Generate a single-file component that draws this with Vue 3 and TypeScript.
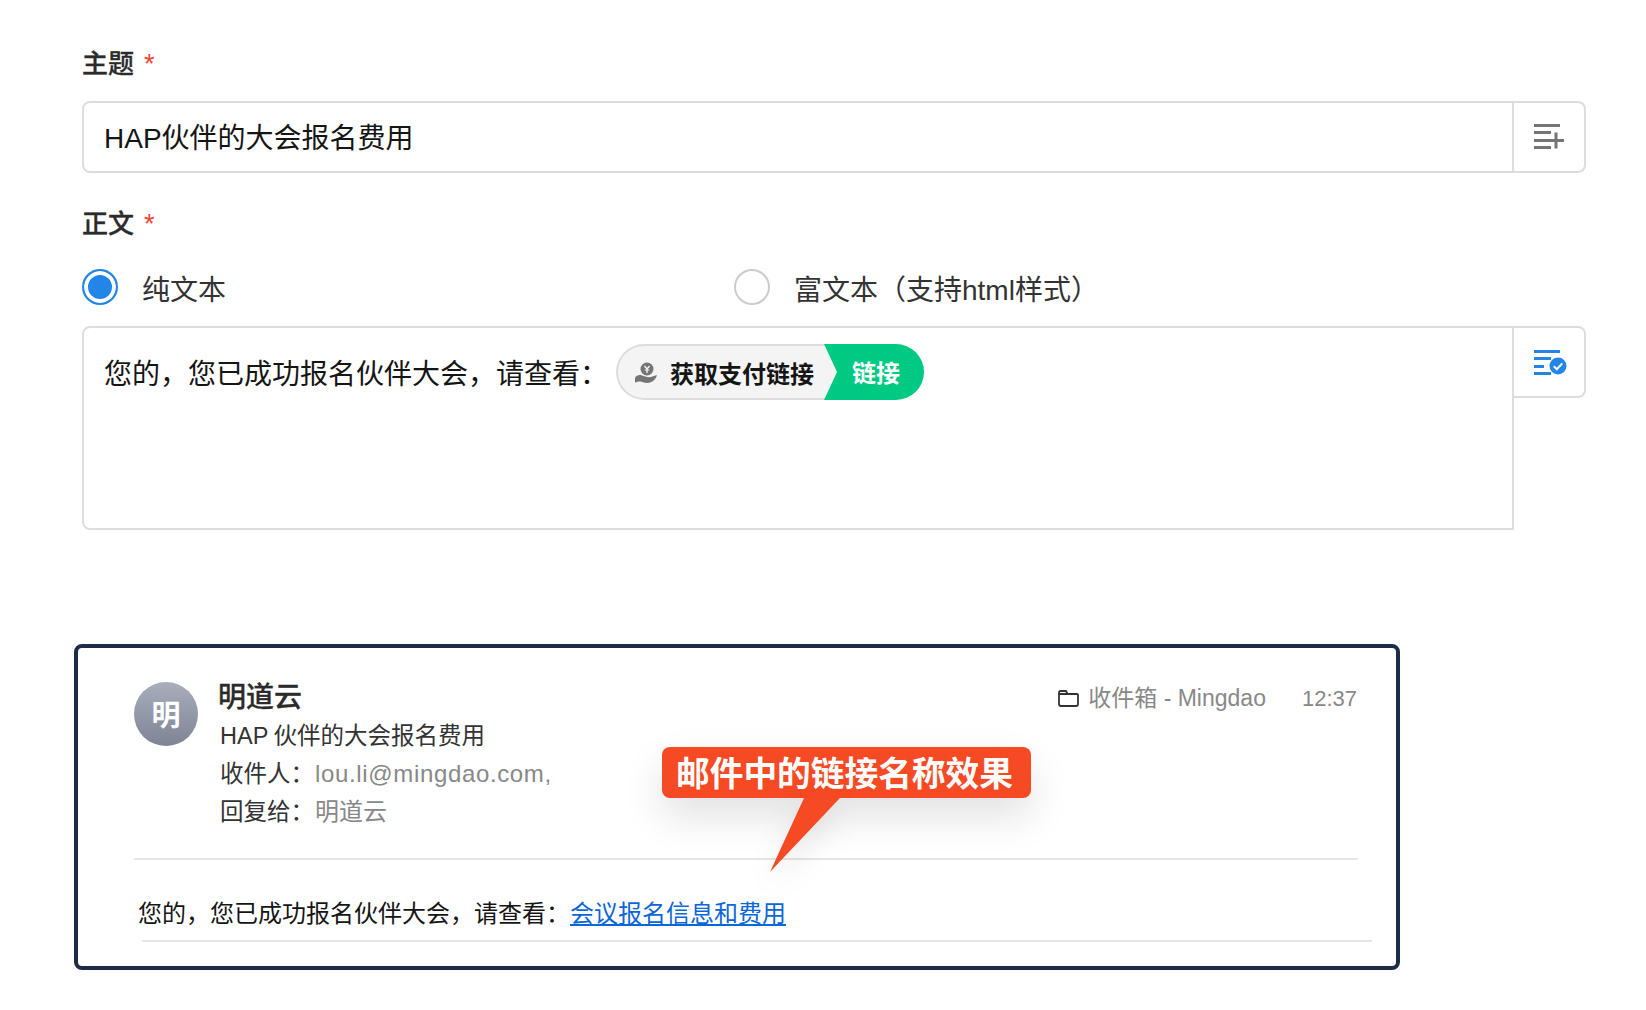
<script setup lang="ts">
const subject: string = 'HAP伙伴的大会报名费用'
const bodyText: string = '您的，您已成功报名伙伴大会，请查看：'
</script>

<template>
  <div class="page">
    <div class="label">主题<span class="req">*</span></div>
    <div class="input">
      <div class="input-text">{{ subject }}</div>
      <div class="side">
        <svg class="add-icon" width="32" height="28" viewBox="0 0 32 28" fill="#757575">
          <rect x="0" y="0" width="26" height="3" />
          <rect x="0" y="7" width="17" height="3" />
          <rect x="0" y="15" width="17" height="3" />
          <rect x="0" y="22" width="17" height="3" />
          <rect x="15" y="15" width="15" height="3" />
          <rect x="20.500" y="8.500" width="3" height="16" />
        </svg>
      </div>
    </div>

    <div class="label second">正文<span class="req">*</span></div>
    <div class="radios">
      <div class="option">
        <span class="radio on"></span>
        <span class="option-text">纯文本</span>
      </div>
      <div class="option">
        <span class="radio"></span>
        <span class="option-text">富文本（支持html样式）</span>
      </div>
    </div>

    <div class="editor-row">
      <div class="editor">
        <span class="editor-text">{{ bodyText }}</span>
        <span class="chip">
          <span class="chip-main">
            <svg class="hand" width="24" height="24" viewBox="0 0 24 24">
              <circle cx="13" cy="8" r="6.500" fill="#757575" />
              <path d="M10.500 5l2.500 3 2.500-3M13 8v4M10.800 9h4.400" stroke="#fff" stroke-width="1.200" fill="none" />
              <path d="M1 17c1.500-3 4.500-3.500 7-2.500l5 1.500c3 .5 6-.5 10-2-1 4-4.500 8-10 8-3 0-5-1.500-7-1.500-2 0-3 .5-5 1z" fill="#757575" />
            </svg>
            <span class="chip-title">获取支付链接</span>
          </span>
          <span class="chip-tag">链接</span>
        </span>
      </div>
      <div class="side-tab">
        <svg width="34" height="26" viewBox="0 0 34 26" fill="#2186e8">
          <rect x="0" y="0" width="26" height="3" />
          <rect x="0" y="7" width="17" height="3" />
          <rect x="0" y="15" width="10" height="3" />
          <rect x="0" y="22" width="17" height="3" />
          <circle cx="24" cy="16" r="8.500" />
          <path d="M19.800 16.200l3 3 5.500-5.800" stroke="#fff" stroke-width="2" fill="none" />
        </svg>
      </div>
    </div>

    <div class="card">
      <div class="head">
        <div class="avatar">明</div>
        <div class="meta">
          <div class="name">明道云</div>
          <div class="row subject">HAP 伙伴的大会报名费用</div>
          <div class="row">收件人：<span class="val mail">lou.li@mingdao.com,</span></div>
          <div class="row">回复给：<span class="val">明道云</span></div>
        </div>
        <div class="info">
          <svg class="folder-icon" width="21" height="17" viewBox="0 0 21 17" fill="none" stroke="#333" stroke-width="1.800">
            <path d="M1 3.500V14a2 2 0 0 0 2 2h15a2 2 0 0 0 2-2V5a1 1 0 0 0-1-1H1zM1 4V2.500A1.500 1.500 0 0 1 2.500 1H8l1.500 3" />
          </svg>
          <span class="folder">收件箱 - Mingdao</span>
          <span class="time">12:37</span>
        </div>
      </div>
      <div class="rule"></div>
      <div class="body">您的，您已成功报名伙伴大会，请查看：<a class="link">会议报名信息和费用</a></div>
      <div class="rule lower"></div>

      <div class="callout">邮件中的链接名称效果</div>
      <svg class="pointer" width="72" height="76" viewBox="0 0 72 76">
        <polygon points="34,0 70,0 0,74" fill="#f64a25" />
      </svg>
    </div>
  </div>
</template>

<style>
html, body { background: #fff; }
</style>

<style scoped>
.page {
  box-sizing: border-box;
  width: 1646px;
  height: 1010px;
  padding: 47px 60px 0 82px;
  font-family: "Liberation Sans", "Noto Sans CJK SC", sans-serif;
  color: #151515;
  overflow: hidden;
}
.label {
  height: 34px;
  line-height: 34px;
  font-size: 26px;
  font-weight: 500;
  color: #2b2b2b;
  -webkit-text-stroke: 0.3px #2b2b2b;
}
.label.second { margin-top: 34px; }
.req {
  margin-left: 10px;
  color: #f44336;
  font-size: 27px;
  font-weight: 400;
  -webkit-text-stroke: 0;
}
.input {
  display: flex;
  height: 72px;
  margin-top: 20px;
  box-sizing: border-box;
  border: 2px solid #ddd;
  border-radius: 8px;
}
.input-text {
  flex: 1;
  padding-left: 20px;
  line-height: 72px;
  font-size: 28px;
}
.side {
  width: 72px;
  border-left: 2px solid #ddd;
  display: flex;
  align-items: center;
  box-sizing: border-box;
  padding-left: 20px;
}
.add-icon { margin-top: 2px; }
.radios {
  display: flex;
  margin-top: 28px;
  height: 36px;
}
.option {
  width: 652px;
  display: flex;
  align-items: center;
  gap: 24px;
  font-size: 28px;
  color: #333;
  line-height: 42px;
}
.option-text { margin-top: 8px; }
.radio {
  box-sizing: border-box;
  width: 36px;
  height: 36px;
  border-radius: 50%;
  border: 2px solid #ccc;
  flex: none;
}
.radio.on {
  border-color: #2186e8;
  background: #2186e8;
  box-shadow: inset 0 0 0 4px #fff;
}
.editor-row {
  display: flex;
  align-items: flex-start;
  margin-top: 21px;
}
.editor {
  box-sizing: border-box;
  width: 1432px;
  height: 204px;
  border: 2px solid #ddd;
  border-radius: 8px 0 0 8px;
  padding: 16px 0 0 20px;
  display: flex;
  align-items: flex-start;
  font-size: 28px;
}
.editor-text { line-height: 61px; }
.chip {
  display: inline-flex;
  height: 56px;
  margin-left: 8px;
}
.chip-main {
  box-sizing: border-box;
  width: 221px;
  height: 56px;
  border: 2px solid #ddd;
  border-right: 0;
  border-radius: 28px 0 0 28px;
  background: #f4f4f4;
  display: flex;
  align-items: center;
  padding-left: 16px;
}
.hand { flex: none; margin-top: 2px; }
.chip-title {
  margin-left: 12px;
  padding-top: 6px;
  font-size: 24px;
  font-weight: 700;
  color: #151515;
  line-height: 44px;
}
.chip-tag {
  box-sizing: border-box;
  width: 100px;
  height: 56px;
  margin-left: -13px;
  padding-left: 28px;
  background: #00c983;
  color: #fff;
  font-size: 24px;
  font-weight: 700;
  line-height: 59px;
  border-radius: 0 28px 28px 0;
  clip-path: polygon(0 0, 100% 0, 100% 100%, 0 100%, 13px 50%);
}
.side-tab {
  box-sizing: border-box;
  width: 72px;
  height: 72px;
  border: 2px solid #ddd;
  border-left: 0;
  border-radius: 0 8px 8px 0;
  padding: 22px 0 0 20px;
}
.card {
  position: relative;
  box-sizing: border-box;
  width: 1326px;
  height: 326px;
  margin: 114px 0 0 -8px;
  border: 4px solid #1e2b45;
  border-radius: 8px;
  padding: 34px 38px 0 56px;
  background: #fff;
}
.head {
  display: flex;
  align-items: flex-start;
  height: 176px;
}
.avatar {
  flex: none;
  width: 64px;
  height: 64px;
  border-radius: 50%;
  background: linear-gradient(180deg, #a9aebd, #7f8495);
  color: #fff;
  font-size: 29px;
  font-weight: 700;
  line-height: 68px;
  text-align: center;
}
.meta {
  margin: -2px 0 0 20px;
  flex: 1;
}
.name {
  height: 37px;
  line-height: 36px;
  font-size: 28px;
  font-weight: 500;
  color: #2b2b2b;
  -webkit-text-stroke: 0.3px #2b2b2b;
}
.row {
  height: 38px;
  line-height: 38px;
  font-size: 23.500px;
  color: #333;
  margin-left: 2px;
}
.subject { word-spacing: -1px; }
.val {
  color: #888;
  font-size: 24px;
  margin-left: 1px;
}
.mail { letter-spacing: 0.650px; }
.info {
  display: flex;
  align-items: center;
  height: 32px;
  padding-right: 1px;
  font-size: 22px;
  color: #888;
}
.folder-icon { flex: none; }
.folder {
  margin-left: 9px;
  font-size: 23px;
  line-height: 28px;
}
.time {
  margin-left: 36px;
  margin-top: 2px;
}
.rule {
  height: 2px;
  background: #e5e5e5;
}
.rule.lower {
  margin: 11px -14px 0 8px;
}
.body {
  margin-top: 39px;
  padding-left: 4px;
  height: 30px;
  line-height: 30px;
  font-size: 24px;
  color: #151515;
}
.link {
  color: #0b66d8;
  text-decoration: underline;
}
.callout {
  position: absolute;
  left: 584px;
  top: 99px;
  width: 369px;
  height: 51px;
  box-sizing: border-box;
  padding-left: 14px;
  border-radius: 8px;
  background: #f64a25;
  color: #fff;
  font-size: 33.700px;
  font-weight: 700;
  line-height: 55px;
  box-shadow: 0 18px 40px rgba(0, 0, 0, 0.12);
}
.pointer {
  position: absolute;
  left: 692px;
  top: 150px;
  filter: drop-shadow(0 12px 14px rgba(0, 0, 0, 0.1));
}
</style>
